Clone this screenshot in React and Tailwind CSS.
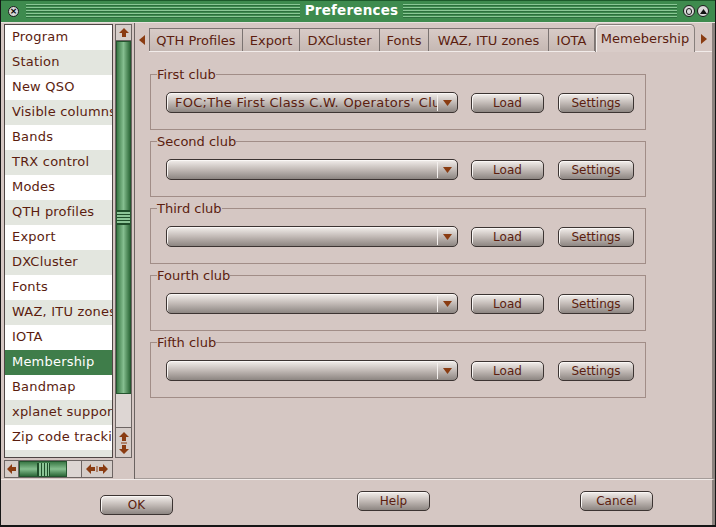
import React from "react";

const sections = [
  "Program",
  "Station",
  "New QSO",
  "Visible columns",
  "Bands",
  "TRX control",
  "Modes",
  "QTH profiles",
  "Export",
  "DXCluster",
  "Fonts",
  "WAZ, ITU zones",
  "IOTA",
  "Membership",
  "Bandmap",
  "xplanet support",
  "Zip code tracking",
  "LoTW support",
];

const tabs = [
  { label: "QTH Profiles", w: "w-[94px]" },
  { label: "Export", w: "w-[57px]" },
  { label: "DXCluster", w: "w-[80px]" },
  { label: "Fonts", w: "w-[49px]" },
  { label: "WAZ, ITU zones", w: "w-[120px]" },
  { label: "IOTA", w: "w-[46px]" },
];

const clubs = [
  { name: "First club", value: "FOC;The First Class C.W. Operators' Club" },
  { name: "Second club", value: "" },
  { name: "Third club", value: "" },
  { name: "Fourth club", value: "" },
  { name: "Fifth club", value: "" },
];

const ARROW = "#8a3c12";

/* gradient used by the raised gtk-ish buttons */
const raised =
  "border border-[#3c3432] rounded-[5px] bg-linear-to-b from-[#f3efec] via-[#c2bab6] to-[#8d8682] shadow-[inset_1px_1px_0_#faf7f5]";

function Btn({ children, className = "" }) {
  return (
    <button
      className={`${raised} flex h-[20px] items-center justify-center text-[12px] leading-none text-[#5b1d0f] ${className}`}
    >
      {children}
    </button>
  );
}

function Combo({ value }) {
  return (
    <div className={`${raised} flex h-[21px] w-[292px] items-center`}>
      <div className="flex-1 overflow-hidden whitespace-nowrap pl-[8px] text-[13px] leading-none tracking-[0.25px] text-[#5b1d0f]">
        {value}
      </div>
      <div className="h-[16px] w-px bg-[#f4f0ee]" />
      <div className="flex w-[19px] justify-center">
        <svg width="9" height="6" viewBox="0 0 9 6">
          <polygon points="0,0 9,0 4.5,6" fill={ARROW} />
        </svg>
      </div>
    </div>
  );
}

function ClubGroup({ name, value }) {
  return (
    <fieldset className="w-[496px] border border-[#a18d87] px-[6px] pb-[16px]">
      <legend className="text-[13px] leading-[17px] text-[#5b1d0f]">{name}</legend>
      <div className="ml-[9px] mt-[9px] flex items-center">
        <Combo value={value} />
        <Btn className="ml-[13px] w-[73px]">Load</Btn>
        <Btn className="ml-[14px] w-[76px]">Settings</Btn>
      </div>
    </fieldset>
  );
}

function TitleStripes({ className = "" }) {
  return (
    <div
      className={`h-[14px] bg-[repeating-linear-gradient(to_bottom,#8ac895_0px,#8ac895_1px,#2c6f3d_1px,#2c6f3d_2px,transparent_2px,transparent_3px)] ${className}`}
    />
  );
}

function ScrollGrip({ vertical }) {
  return vertical ? (
    <div className="h-[15px] w-[13px] bg-[repeating-linear-gradient(to_bottom,#1f4d29_0px,#1f4d29_1px,#8cc496_1px,#8cc496_3px)] border-y border-[#1f4d29]" />
  ) : (
    <div className="h-[13px] w-[13px] bg-[repeating-linear-gradient(to_right,#1f4d29_0px,#1f4d29_1px,#8cc496_1px,#8cc496_3px)] border-x border-[#1f4d29]" />
  );
}

export default function App() {
  return (
    <div className="flex h-[527px] w-[716px] flex-col overflow-hidden border-x border-b-[2px] border-[#161616] bg-[#d5c7c3] font-['DejaVu_Sans',sans-serif] text-[#5b1d0f]">
      {/* title bar */}
      <div className="flex h-[23px] items-center border-b border-[#e8e2df] bg-[#3e8b4e] pl-[7px] pr-[6px] shadow-[inset_0_1px_0_#1d5a2b]">
        <div className="flex h-[11px] w-[11px] items-center justify-center rounded-full border border-[#1a1a1a] bg-[#d8d8d8] text-[9px] font-bold leading-none text-black">
          ×
        </div>
        <TitleStripes className="ml-[7px] flex-1" />
        <div className="px-[5px] text-[13.5px] font-bold leading-none tracking-[0.2px] text-white">Preferences</div>
        <TitleStripes className="flex-1" />
        <div className="ml-[6px] flex h-[12px] w-[12px] items-center justify-center rounded-full border border-[#1a1a1a] bg-[#d8d8d8]">
          <div className="h-[7px] w-[6px] rounded-full border border-[#1a1a1a]" />
        </div>
        <div className="ml-[2px] flex h-[12px] w-[12px] items-center justify-center rounded-full border border-[#1a1a1a] bg-[#d8d8d8]">
          <svg width="7" height="5" viewBox="0 0 7 5">
            <polygon points="3.5,0 7,5 0,5" fill="#111" />
          </svg>
        </div>
      </div>

      {/* main area */}
      <div className="flex h-[456px] border-r-[3px] border-[#8a827e] pl-[3px]">
        {/* section list */}
        <div className="flex w-[129px] flex-col pt-px">
          <div className="flex h-[434px]">
            <div className="w-[109px] overflow-hidden border border-[#4e4644] bg-white">
              {sections.map((s, i) => (
                <div
                  key={s}
                  className={`h-[25px] whitespace-nowrap pl-[7px] text-[13px] leading-[24px] tracking-[0.2px] ${
                    s === "Membership"
                      ? "bg-[#3f7d4a] text-white"
                      : i % 2 === 1
                        ? "bg-[#e3e6df]"
                        : "bg-white"
                  }`}
                >
                  {s}
                </div>
              ))}
            </div>

            {/* vertical scrollbar */}
            <div className="ml-[2px] flex w-[17px] flex-col border border-[#6d6563] bg-[#ddd6d3]">
              <div className="flex h-[16px] items-center justify-center border-b border-[#6d6563] bg-[#d5cdc9]">
                <svg width="10" height="9" viewBox="0 0 10 9">
                  <polygon points="5,0 10,5 7,5 7,9 3,9 3,5 0,5" fill={ARROW} />
                </svg>
              </div>
              <div className="flex h-[353px] items-center justify-center border border-[#24552f] bg-linear-to-r from-[#3b7a47] via-[#86bf90] to-[#2e6a3a]">
                <ScrollGrip vertical />
              </div>
              <div className="flex-1" />
              <div className="flex h-[30px] flex-col items-center justify-center border-t border-[#6d6563] bg-[#d5cdc9]">
                <svg width="10" height="22" viewBox="0 0 10 22">
                  <polygon points="5,0 10,5 7,5 7,9 3,9 3,5 0,5" fill={ARROW} />
                  <rect x="2" y="10.5" width="6" height="1" fill={ARROW} />
                  <polygon points="3,13 7,13 7,17 10,17 5,22 0,17 3,17" fill={ARROW} />
                </svg>
              </div>
            </div>
          </div>

          {/* horizontal scrollbar */}
          <div className="mt-[2px] flex h-[18px] w-[109px] border border-[#6d6563] bg-[#ddd6d3]">
            <div className="flex w-[14px] items-center justify-center border-r border-[#6d6563] bg-[#d5cdc9]">
              <svg width="9" height="10" viewBox="0 0 9 10">
                <polygon points="0,5 5,0 5,3 9,3 9,7 5,7 5,10" fill={ARROW} />
              </svg>
            </div>
            <div className="flex w-[48px] items-center justify-center border border-[#24552f] bg-linear-to-b from-[#3b7a47] via-[#86bf90] to-[#2e6a3a]">
              <ScrollGrip />
            </div>
            <div className="flex-1" />
            <div className="flex w-[31px] items-center justify-center border-l border-[#6d6563] bg-[#d5cdc9]">
              <svg width="22" height="10" viewBox="0 0 22 10">
                <polygon points="0,5 5,0 5,3 9,3 9,7 5,7 5,10" fill={ARROW} />
                <rect x="10.5" y="2" width="1" height="6" fill={ARROW} />
                <polygon points="13,3 17,3 17,0 22,5 17,10 17,7 13,7" fill={ARROW} />
              </svg>
            </div>
          </div>
        </div>

        {/* notebook */}
        <div className="ml-px flex flex-1 flex-col border-l border-[#6b6361]">
          <div className="flex h-[29px] items-end">
            <div className="flex h-[24px] w-[14px] items-center justify-center">
              <svg width="6" height="10" viewBox="0 0 6 10">
                <polygon points="6,0 6,10 0,5" fill={ARROW} />
              </svg>
            </div>
            <div className="flex flex-1 items-end border-b border-[#f2ecea]">
              {tabs.map((t) => (
                <div
                  key={t.label}
                  className={`${t.w} flex h-[23px] items-center justify-center border-r border-t border-[#7b7371] bg-linear-to-b from-[#d8cbc7] to-[#c5b8b3] text-[13px] leading-none first:border-l`}
                >
                  {t.label}
                </div>
              ))}
              <div className="-mb-px flex h-[28px] w-[100px] items-center justify-center rounded-t-[5px] border-x border-t border-[#877f7c] bg-[#d9ccc8] text-[13px] leading-none shadow-[inset_1px_1px_0_#f6f1ef]">
                Memebership
              </div>
              <div className="flex h-[24px] flex-1 items-center justify-center">
                <svg width="6" height="10" viewBox="0 0 6 10">
                  <polygon points="0,0 0,10 6,5" fill={ARROW} />
                </svg>
              </div>
            </div>
          </div>

          <div className="flex flex-1 flex-col gap-[3px] border-b border-[#a59c99] pl-[15px] pt-[14px]">
            {clubs.map((c) => (
              <ClubGroup key={c.name} name={c.name} value={c.value} />
            ))}
          </div>
        </div>
      </div>

      {/* dialog buttons */}
      <div className="flex flex-1 items-start border-r-[3px] border-t border-[#f1ebe9] border-r-[#8a827e] pl-[99px] pt-[11px]">
        <Btn className="mt-[4px] w-[73px]">OK</Btn>
        <Btn className="ml-[184px] w-[73px]">Help</Btn>
        <Btn className="ml-[150px] w-[73px]">Cancel</Btn>
      </div>
    </div>
  );
}
